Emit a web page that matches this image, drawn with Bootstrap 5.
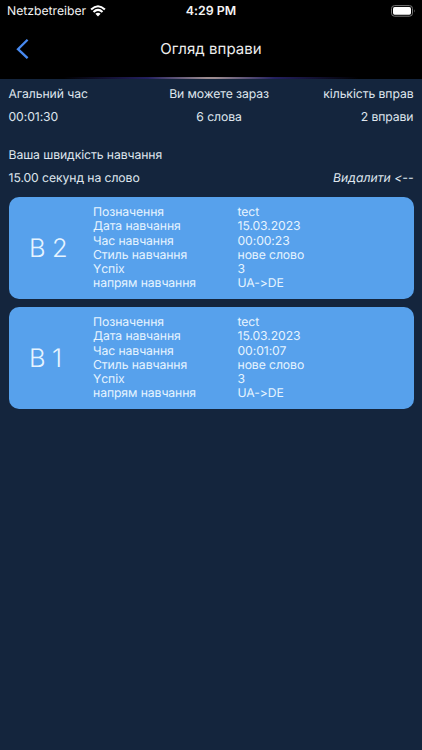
<!DOCTYPE html>
<html lang="uk">
<head>
<meta charset="utf-8">
<meta name="viewport" content="width=device-width, initial-scale=1">
<title>Огляд вправи</title>
<link href="https://cdn.jsdelivr.net/npm/bootstrap@5.3.0/dist/css/bootstrap.min.css" rel="stylesheet">
<style>
body{font-family:Inter,"Liberation Sans",sans-serif;background:#14253d;color:#dfe5ee;font-size:12.2px;line-height:22.5px;letter-spacing:-.08px;font-feature-settings:"calt" 0;text-rendering:geometricPrecision;min-height:750px}
.topbar{background:#000;height:79px}
.status{height:22px;padding:0 6px 0 7px;color:#f4f4f4;line-height:22px}
.carrier{letter-spacing:0}
.clock{font-size:12.4px;font-weight:600;letter-spacing:0;padding-right:1px}
.title-row{height:55px;padding:0 16px 2px}
.page-title{font-size:15px;letter-spacing:.05px;color:#eee}
.glow{height:2px;background:linear-gradient(90deg,#000 15%,#242060 35%,#9d8c90 49%,#9d8c90 51%,#242060 65%,#000 85%)}
.summary{padding:4px 8.5px 0}
.available{padding-left:27px}
.speed{padding:16px 8.5px 0}
.remove{letter-spacing:0}
.exercises{padding:8px 8.5px;gap:8.5px}
.exercise{background:#57a1ec;border-radius:10px;height:101.5px;color:#e6f4ff;line-height:14.25px}
.tag{width:84.5px;padding-left:20.5px;padding-top:3px;font-size:25.5px;font-weight:300;letter-spacing:-.4px}
.keys{width:144.5px}
</style>
<script src="https://cdn.jsdelivr.net/npm/bootstrap@5.3.0/dist/js/bootstrap.bundle.min.js"></script>
</head>
<body>
<header class="topbar">
  <div class="status row g-0 align-items-center">
    <div class="col d-flex align-items-center gap-1"><span class="carrier">Netzbetreiber</span>
      <svg width="16" height="12" viewBox="0 0 16 12" fill="none" stroke="#fff" stroke-width="2.1"><path d="M1.1 4.5Q8-2 14.9 4.5M3.5 7Q8 2.7 12.5 7"/><path d="M8 11.5 5.4 8.8Q8 6.5 10.6 8.8Z" fill="#fff" stroke="none"/></svg>
    </div>
    <div class="col-auto clock">4:29 PM</div>
    <div class="col d-flex justify-content-end">
      <svg width="25" height="12" viewBox="0 0 25 12"><rect x=".5" y=".6" width="21" height="10.6" rx="3" fill="none" stroke="#777"/><rect x="2" y="2.1" width="18" height="7.6" rx="1.6" fill="#fff"/><path d="M23 4.2Q24.5 5.9 23 7.6Z" fill="#777"/></svg>
    </div>
  </div>
  <div class="title-row row g-0 align-items-center">
    <div class="col d-flex"><svg width="14" height="20" viewBox="0 0 14 20" fill="none" stroke="#488af0" stroke-width="2.3"><path d="M11.6.8 2 10.2l9.6 9"/></svg></div>
    <h1 class="page-title col-auto m-0 fw-normal">Огляд вправи</h1>
    <div class="col"></div>
  </div>
  <div class="glow"></div>
</header>
<main>
  <section class="summary d-flex justify-content-between">
    <div><div>Агальний час</div><div>00:01:30</div></div>
    <div class="available text-center"><div>Ви можете зараз</div><div>6 слова</div></div>
    <div class="text-end"><div>кількість вправ</div><div>2 вправи</div></div>
  </section>
  <section class="speed">
    <div>Ваша швидкість навчання</div>
    <div class="d-flex justify-content-between"><span>15.00 секунд на слово</span><span class="remove fst-italic">Видалити &lt;--</span></div>
  </section>
  <section class="exercises d-flex flex-column">
    <article class="exercise d-flex align-items-center">
      <div class="tag">B 2</div>
      <div class="keys"><div>Позначення</div><div>Дата навчання</div><div>Час навчання</div><div>Стиль навчання</div><div>Yспіх</div><div>напрям навчання</div></div>
      <div class="values"><div>tect</div><div>15.03.2023</div><div>00:00:23</div><div>нове слово</div><div>3</div><div>UA-&gt;DE</div></div>
    </article>
    <article class="exercise d-flex align-items-center">
      <div class="tag">B 1</div>
      <div class="keys"><div>Позначення</div><div>Дата навчання</div><div>Час навчання</div><div>Стиль навчання</div><div>Yспіх</div><div>напрям навчання</div></div>
      <div class="values"><div>tect</div><div>15.03.2023</div><div>00:01:07</div><div>нове слово</div><div>3</div><div>UA-&gt;DE</div></div>
    </article>
  </section>
</main>
</body>
</html>
